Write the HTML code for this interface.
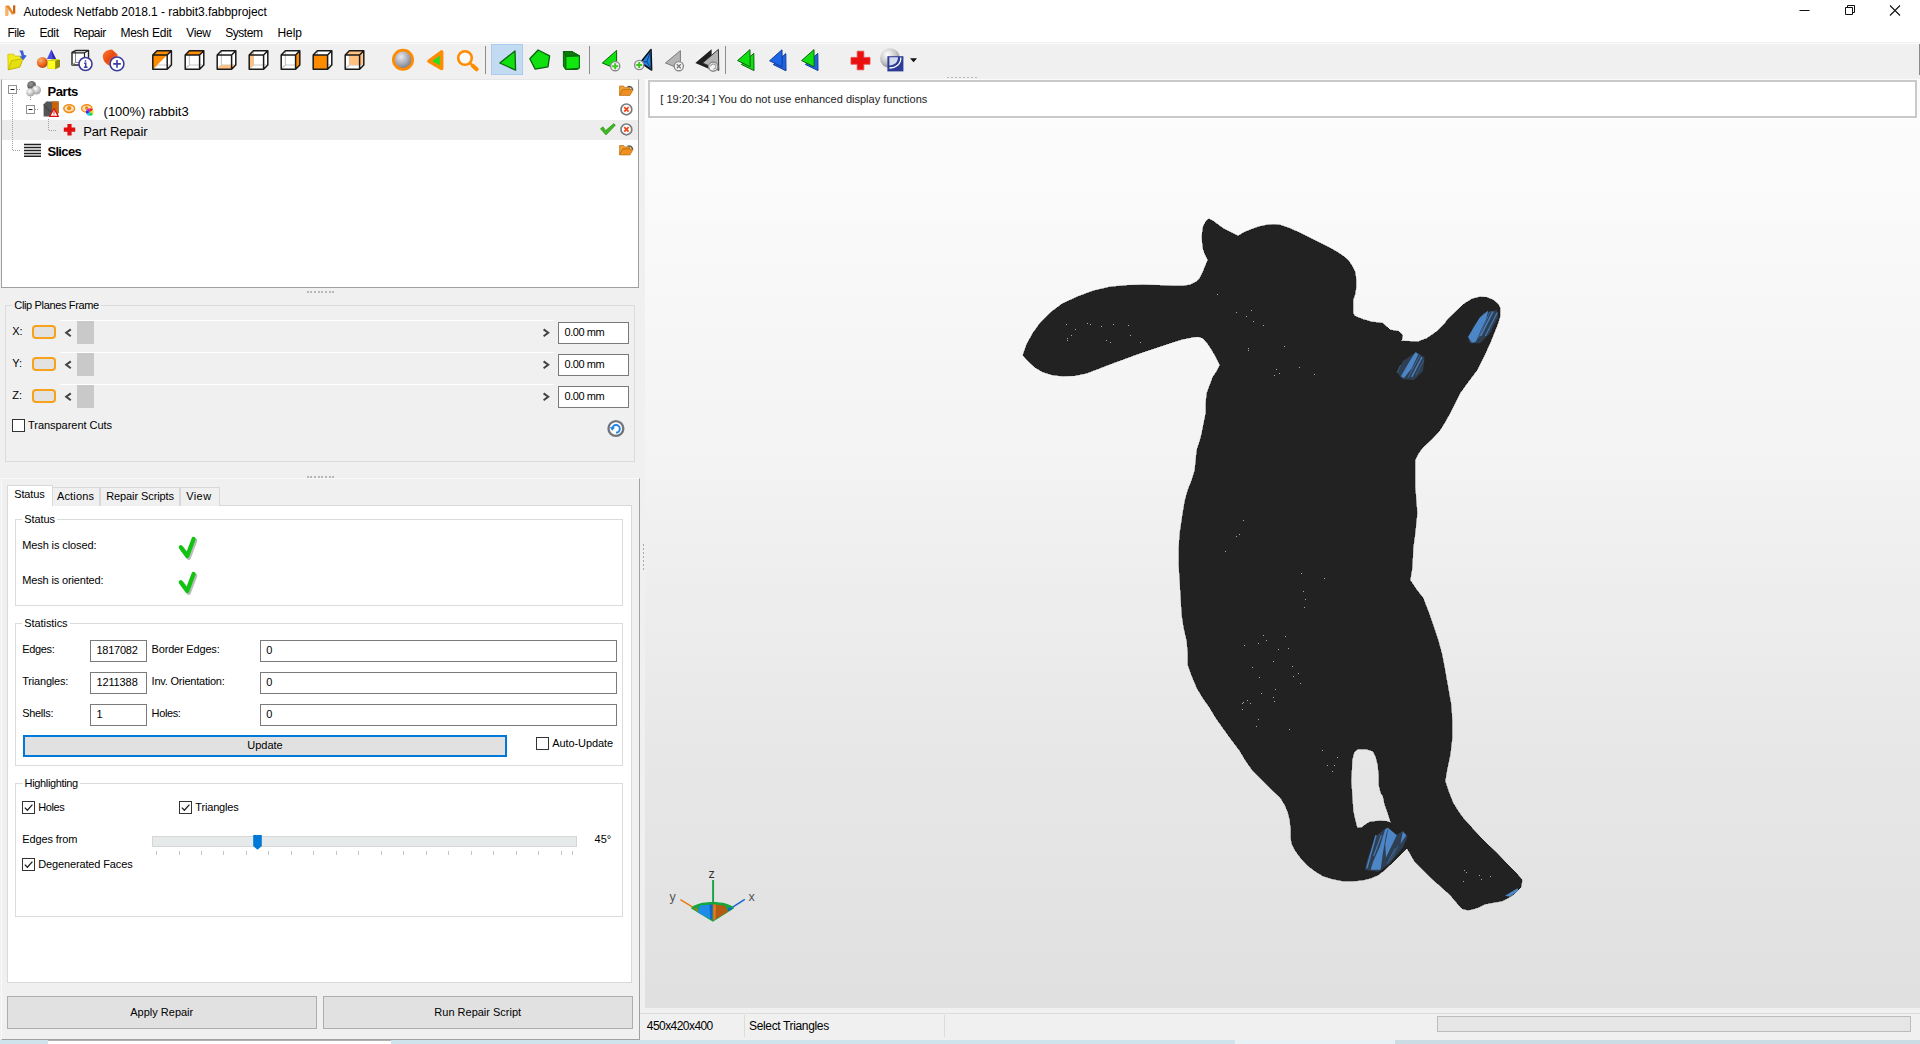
<!DOCTYPE html>
<html><head><meta charset="utf-8"><title>Autodesk Netfabb 2018.1 - rabbit3.fabbproject</title>
<style>

html,body{margin:0;padding:0;}
body{width:1920px;height:1044px;overflow:hidden;background:#f0f0f0;font-family:"Liberation Sans",sans-serif;color:#000;}
#app{position:relative;width:1920px;height:1044px;overflow:hidden;background:#f0f0f0;}
.abs{position:absolute;}
.t{position:absolute;white-space:nowrap;line-height:1;}
.ui{font-size:12px;}
.ar{font-size:11px;color:#000;}
svg{position:absolute;overflow:visible;}
#titlebar{left:0;top:0;width:1920px;height:23px;background:#fff;}
#menubar{left:0;top:23px;width:1920px;height:19px;background:#fff;}
#toolbar{left:0;top:42px;width:1920px;height:37px;background:#f0f0f0;}
.sep{position:absolute;top:46px;width:1px;height:28px;background:#8d8d8d;}
#tree{left:1px;top:79px;width:636px;height:207px;background:#fff;border:1px solid #a0a0a0;border-top-color:#e6e6e6;}
.gb{position:absolute;border:1px solid #dcdcdc;}
.gbl{position:absolute;white-space:nowrap;line-height:1;font-size:11px;padding:0 2px;}
.inp{position:absolute;background:#fff;border:1px solid #7a7a7a;box-sizing:border-box;font-size:11px;line-height:20px;white-space:nowrap;}
.cb{position:absolute;width:13px;height:13px;box-sizing:border-box;border:1px solid #333;background:#fff;}
.btn{position:absolute;box-sizing:border-box;background:#e1e1e1;border:1px solid #adadad;font-size:11px;text-align:center;white-space:nowrap;}
.tab{position:absolute;box-sizing:border-box;background:#f0f0f0;border:1px solid #d9d9d9;border-bottom:none;font-size:11px;white-space:nowrap;}

</style></head>
<body>
<div id="app">
<div id="titlebar" class="abs"></div><div id="menubar" class="abs"></div><div id="toolbar" class="abs"></div><div class="abs" style="left:0;top:43px;width:1920px;height:1px;background:#fbfbfb"></div><div class="abs" style="left:1918.5px;top:44px;width:1.5px;height:31px;background:#8a8a8a"></div><div class="t " style="left:23.40px;top:6.00px;font-size:12px;letter-spacing:-0.047px;">Autodesk Netfabb 2018.1 - rabbit3.fabbproject</div><div class="t " style="left:7.50px;top:27.00px;font-size:12px;letter-spacing:-0.524px;">File</div><div class="t " style="left:39.40px;top:27.00px;font-size:12px;letter-spacing:-0.365px;">Edit</div><div class="t " style="left:73.40px;top:27.00px;font-size:12px;letter-spacing:-0.518px;">Repair</div><div class="t " style="left:120.40px;top:27.00px;font-size:12px;letter-spacing:-0.230px;">Mesh Edit</div><div class="t " style="left:186.20px;top:27.00px;font-size:12px;letter-spacing:-0.341px;">View</div><div class="t " style="left:225.20px;top:27.00px;font-size:12px;letter-spacing:-0.456px;">System</div><div class="t " style="left:277.40px;top:27.00px;font-size:12px;letter-spacing:-0.051px;">Help</div><div class="sep" style="left:485px"></div><div class="sep" style="left:589px"></div><div class="sep" style="left:725px"></div><div class="abs" style="left:946.5px;top:76.5px;width:2px;height:1.6px;background:#b8b8b8"></div><div class="abs" style="left:950.5px;top:76.5px;width:2px;height:1.6px;background:#b8b8b8"></div><div class="abs" style="left:954.5px;top:76.5px;width:2px;height:1.6px;background:#b8b8b8"></div><div class="abs" style="left:958.5px;top:76.5px;width:2px;height:1.6px;background:#b8b8b8"></div><div class="abs" style="left:962.5px;top:76.5px;width:2px;height:1.6px;background:#b8b8b8"></div><div class="abs" style="left:966.5px;top:76.5px;width:2px;height:1.6px;background:#b8b8b8"></div><div class="abs" style="left:970.5px;top:76.5px;width:2px;height:1.6px;background:#b8b8b8"></div><div class="abs" style="left:974.5px;top:76.5px;width:2px;height:1.6px;background:#b8b8b8"></div><svg style="left:0;top:0" width="1920" height="80" viewBox="0 0 1920 80"><g transform="translate(0.2,0.6) scale(0.96,0.9)"><path d="M5.6,17.2 V5.6 L9.2,5.4 L13.4,12.6 V5.4 H15.6 V14.2 L12.4,15.6 L8.4,9.2 V16.4 Z" fill="#e8862a"/><path d="M13.4,12.6 V5.4 H15.6 V14.2 Z" fill="#c86414"/><path d="M5.6,17.2 V5.6 L8.4,9.2 V16.4 Z" fill="#f6b46a"/></g>
<path d="M1799.5,10.5 h10" stroke="#111" stroke-width="1" fill="none"/>
<path d="M1845.5,7.5 h7 v7 h-7 z M1847.5,7.5 v-2 h7 v7 h-2" stroke="#111" stroke-width="1" fill="none"/>
<path d="M1890,5.5 l10,10 M1900,5.5 l-10,10" stroke="#111" stroke-width="1.1" fill="none"/>

<g>
<path d="M7.8,54.4 L13.4,54 L15,56.2 L21.4,56 L22,60 L19.8,67 L8.2,69.8 Z" fill="#f2ea1a" stroke="#c4bc00" stroke-width="0.7" stroke-linejoin="round"/>
<path d="M8.2,69.8 L11.6,60.6 L23.4,58.6 L19.6,67.2 Z" fill="#e6de10" stroke="#b4ac00" stroke-width="0.7" stroke-linejoin="round"/>
<path d="M19.3,50.4 L23,50.4 L24,54.8 L26.7,55.8 L23.4,59.9 L19.3,56.5 L21.7,56.5 L21,53.5 Z" fill="#3b5be0"/>
</g>
<g>
<defs><radialGradient id="gsph" cx="0.35" cy="0.3" r="0.8"><stop offset="0" stop-color="#ffb070"/><stop offset="0.6" stop-color="#e8641a"/><stop offset="1" stop-color="#a84008"/></radialGradient></defs>
<polygon points="51.3,49.6 47,59 56,59" fill="#4a4ae8"/>
<polygon points="51.3,49.6 56,59 53,59.5" fill="#2c2ca0"/>
<circle cx="42.4" cy="62.4" r="5.5" fill="url(#gsph)"/>
<polygon points="47.6,60.4 56.5,59 60,60 60,67 55.2,69.2 47.6,68.6" fill="#8c8c14"/>
<polygon points="47.6,60.6 55.2,61 55.2,69.2 47.6,68.6" fill="#ffff20"/>
<polygon points="47.6,60.6 52.5,59 60,59.2 55.2,61" fill="#d8d820"/>
</g>
<g>
<path d="M72,52.5 L76,50.5 L88.5,50.5 L88.5,62 L84.5,65 L72,65 Z" fill="#fff" stroke="#222" stroke-width="1.4" stroke-linejoin="round"/>
<path d="M75.5,51.5 V62.5 L72,65 M75.5,62.5 H88" fill="none" stroke="#888" stroke-width="1"/>
<path d="M72,52.8 H84.5 V65 M84.5,52.8 L88.5,50.5" fill="none" stroke="#222" stroke-width="1.2"/>
<circle cx="85.5" cy="64" r="6.5" fill="#fff" stroke="#3c3c9c" stroke-width="1.6"/>
<path d="M85.5,60.2 v1.6 M84.1,63.2 H85.7 V67 M83.9,67.2 H87.5" stroke="#3c3c9c" stroke-width="1.5" fill="none"/>
</g>
<g>
<defs><linearGradient id="gcyl" x1="0" y1="0" x2="1" y2="1"><stop offset="0" stop-color="#ff7a30"/><stop offset="0.5" stop-color="#e84a10"/><stop offset="1" stop-color="#ff9a60"/></linearGradient></defs>
<path d="M103,58 C102,53 106,50 112,49.6 L118,55 L110,66 C106,64 103.5,61.5 103,58 Z" fill="url(#gcyl)"/>
<circle cx="117" cy="63.9" r="6.9" fill="#fff" stroke="#3c3c9c" stroke-width="1.6"/>
<path d="M113.2,63.9 h7.6 M117,60.1 v7.6" stroke="#3c3c9c" stroke-width="1.6" fill="none"/>
</g><g><polygon points="152.8,55 157,50.8 171.4,50.8 171.4,65 167.2,69.2 152.8,69.2" fill="#fff"/><path d="M157,50.8 V65 H171.4 M157,65 L152.8,69.2" stroke="#c8c8c8" stroke-width="1.2" fill="none"/><polygon points="152.8,55 157,50.8 171.4,50.8 167.2,55" fill="#ff8c00"/><polygon points="152.8,55 167.2,55 152.8,69.2" fill="#ff8c00"/><path d="M152.8,55 H167.2 V69.2 H152.8 Z M152.8,55 L157,50.8 H171.4 L167.2,55 M171.4,50.8 V65 L167.2,69.2" stroke="#1a1a1a" stroke-width="1.5" fill="none" stroke-linejoin="round"/></g><g><polygon points="185.2,55 189.4,50.8 203.8,50.8 203.8,65 199.6,69.2 185.2,69.2" fill="#fff"/><path d="M189.4,50.8 V65 H203.8 M189.4,65 L185.2,69.2" stroke="#c8c8c8" stroke-width="1.2" fill="none"/><polygon points="185.2,55 189.4,50.8 203.8,50.8 199.6,55" fill="#ff8c00"/><path d="M185.2,55 H199.6 V69.2 H185.2 Z M185.2,55 L189.4,50.8 H203.8 L199.6,55 M203.8,50.8 V65 L199.6,69.2" stroke="#1a1a1a" stroke-width="1.5" fill="none" stroke-linejoin="round"/></g><g><polygon points="217.2,55 221.4,50.8 235.8,50.8 235.8,65 231.6,69.2 217.2,69.2" fill="#fff"/><path d="M221.4,50.8 V65 H235.8 M221.4,65 L217.2,69.2" stroke="#c8c8c8" stroke-width="1.2" fill="none"/><polygon points="217.2,69.2 221.4,65 235.8,65 231.6,69.2" fill="#ffc080"/><path d="M217.2,55 H231.6 V69.2 H217.2 Z M217.2,55 L221.4,50.8 H235.8 L231.6,55 M235.8,50.8 V65 L231.6,69.2" stroke="#1a1a1a" stroke-width="1.5" fill="none" stroke-linejoin="round"/></g><g><polygon points="249.2,55 253.4,50.8 267.8,50.8 267.8,65 263.6,69.2 249.2,69.2" fill="#fff"/><path d="M253.4,50.8 V65 H267.8 M253.4,65 L249.2,69.2" stroke="#c8c8c8" stroke-width="1.2" fill="none"/><polygon points="249.2,55 253.4,50.8 253.4,65 249.2,69.2" fill="#ffc080"/><path d="M249.2,55 H263.6 V69.2 H249.2 Z M249.2,55 L253.4,50.8 H267.8 L263.6,55 M267.8,50.8 V65 L263.6,69.2" stroke="#1a1a1a" stroke-width="1.5" fill="none" stroke-linejoin="round"/></g><g><polygon points="281.2,55 285.4,50.8 299.8,50.8 299.8,65 295.6,69.2 281.2,69.2" fill="#fff"/><path d="M285.4,50.8 V65 H299.8 M285.4,65 L281.2,69.2" stroke="#c8c8c8" stroke-width="1.2" fill="none"/><polygon points="295.6,55 299.8,50.8 299.8,65 295.6,69.2" fill="#ff8c00"/><path d="M281.2,55 H295.6 V69.2 H281.2 Z M281.2,55 L285.4,50.8 H299.8 L295.6,55 M299.8,50.8 V65 L295.6,69.2" stroke="#1a1a1a" stroke-width="1.5" fill="none" stroke-linejoin="round"/></g><g><polygon points="313.2,55 317.4,50.8 331.8,50.8 331.8,65 327.6,69.2 313.2,69.2" fill="#fff"/><path d="M317.4,50.8 V65 H331.8 M317.4,65 L313.2,69.2" stroke="#c8c8c8" stroke-width="1.2" fill="none"/><rect x="313.2" y="55" width="14.4" height="14.2" fill="#ff8c00"/><path d="M313.2,55 H327.6 V69.2 H313.2 Z M313.2,55 L317.4,50.8 H331.8 L327.6,55 M331.8,50.8 V65 L327.6,69.2" stroke="#1a1a1a" stroke-width="1.5" fill="none" stroke-linejoin="round"/></g><g><polygon points="345.2,55 349.4,50.8 363.8,50.8 363.8,65 359.6,69.2 345.2,69.2" fill="#fff"/><path d="M349.4,50.8 V65 H363.8 M349.4,65 L345.2,69.2" stroke="#c8c8c8" stroke-width="1.2" fill="none"/><rect x="349.4" y="50.8" width="13.4" height="14.2" fill="#ffc080"/><polygon points="345.2,55 349.4,50.8 363.8,50.8 359.6,55" fill="#ffc080"/><path d="M345.2,55 H359.6 V69.2 H345.2 Z M345.2,55 L349.4,50.8 H363.8 L359.6,55 M363.8,50.8 V65 L359.6,69.2" stroke="#1a1a1a" stroke-width="1.5" fill="none" stroke-linejoin="round"/></g>
<g>
<defs><radialGradient id="gsp2" cx="0.4" cy="0.35" r="0.75"><stop offset="0" stop-color="#e8e8f0"/><stop offset="0.55" stop-color="#a0a4b0"/><stop offset="1" stop-color="#5a6480"/></radialGradient></defs>
<circle cx="403" cy="59.7" r="9.6" fill="url(#gsp2)" stroke="#ff8c00" stroke-width="2.8"/>
</g><polygon points="429,61.2 441.6,52 441.6,68.4" fill="#20e020" stroke="#ff8c00" stroke-width="3.6" stroke-linejoin="round"/><g><circle cx="465" cy="58" r="6.8" fill="#fcfcfc" stroke="#ff8c00" stroke-width="2.6"/><path d="M470.2,63.2 L472.5,65.4" stroke="#ff8c00" stroke-width="2.6"/><path d="M473,66 L476.6,69.2" stroke="#ff8c00" stroke-width="4.2" stroke-linecap="round"/></g><rect x="491.5" y="44.5" width="31" height="30" fill="#c2dbf3" stroke="#a8cbee" stroke-width="1"/><polygon points="499.8,63 515,51 515.6,70.2" fill="#10e010" stroke="#0a640a" stroke-width="1.3" stroke-linejoin="round"/><polygon points="538.1,50 549.6,55.8 548,66.8 535.2,69.2 529.8,58.8" fill="#10e010" stroke="#0a640a" stroke-width="1.3" stroke-linejoin="round"/><g stroke="#0a640a" stroke-width="1" stroke-linejoin="round">
<polygon points="563.4,51.5 572,51.5 579.5,55.8 579.5,68 577.5,69.5 565.5,69.5 563.4,66" fill="#0a8c0a"/>
<polygon points="565.8,56.2 579.3,55.8 579.3,68.2 566,69.3" fill="#10e810"/>
<polygon points="563.4,51.6 572,51.6 579.3,55.8 565.8,56.2" fill="#0c7a0c"/>
</g><polygon points="602.3,63 616.6,50.4 616.6,69" fill="#10e010" stroke="#0a640a" stroke-width="1" stroke-linejoin="round"/><circle cx="615.2" cy="66.2" r="4.6" fill="#f4f4f4" stroke="#8a8a8a" stroke-width="1.4"/><path d="M612.2,66.2 h6 M615.2,63.2 v6" stroke="#3cc81e" stroke-width="2" fill="none"/><polygon points="640.5,62.5 651,49.5 651.6,70" fill="#1e82e6" stroke="#111" stroke-width="1.6" stroke-linejoin="round"/><path d="M651.3,50 L646.8,61.5 L651.3,69.6 M646.8,61.5 L641,62.6" stroke="#123c78" stroke-width="1" fill="none"/><circle cx="639.2" cy="65" r="4.6" fill="#f4f4f4" stroke="#8a8a8a" stroke-width="1.4"/><path d="M636.2,65 h6 M639.2,62 v6" stroke="#3cc81e" stroke-width="2" fill="none"/><polygon points="665.5,63 680.4,50.6 680.4,69" fill="#b4b4b4" stroke="#7a7a7a" stroke-width="1" stroke-linejoin="round"/><circle cx="678.8" cy="66.2" r="4.6" fill="#f4f4f4" stroke="#8a8a8a" stroke-width="1.4"/><path d="M676.8,64.2 l4,4 M680.8,64.2 l-4,4" stroke="#777" stroke-width="1.3" fill="none"/><polygon points="695.3,63 711.6,49.2 711.6,70" fill="#1e1e1e"/><polygon points="702.6,63 718.4,49.4 718.8,70.4" fill="#b4b4b4" stroke="#333" stroke-width="1" stroke-linejoin="round"/><circle cx="713.2" cy="66.6" r="4.6" fill="#f4f4f4" stroke="#8a8a8a" stroke-width="1.4"/><path d="M710.6,66.6 a2.6,2.6 0 1 1 2.6,2.6" stroke="#aaa" stroke-width="1.3" fill="none"/><polygon points="741.4,64.4 753.8,53.4 754,70.6" fill="#10e010" stroke="#0a640a" stroke-width="1" stroke-linejoin="round"/><polygon points="737.6,60.6 750,49.6 750.2,66.8" fill="#10e010" stroke="#0a640a" stroke-width="1" stroke-linejoin="round"/><polygon points="773.4,64.6 785.8,53.6 786,70.8" fill="#1e64e6" stroke="#123c96" stroke-width="1" stroke-linejoin="round"/><polygon points="769.6,60.8 782,49.8 782.2,67" fill="#1e64e6" stroke="#123c96" stroke-width="1" stroke-linejoin="round"/><polygon points="805.4,64.4 817.8,53.4 818,70.6" fill="#1e64e6" stroke="#123c96" stroke-width="1" stroke-linejoin="round"/><polygon points="801.6,60.6 814,49.6 814.2,66.8" fill="#10e010" stroke="#0a640a" stroke-width="1" stroke-linejoin="round"/><path d="M857.2,51.2 h6.6 v6.2 h6.2 v6.8 h-6.2 v5.6 h-6.6 v-5.6 h-6.2 v-6.8 h6.2 Z" fill="#e81010" stroke="#f04040" stroke-width="0.8" stroke-linejoin="round"/>
<g>
<defs><radialGradient id="gsp3" cx="0.38" cy="0.32" r="0.8"><stop offset="0" stop-color="#ffffff"/><stop offset="0.5" stop-color="#c8c8c8"/><stop offset="1" stop-color="#7a7a7a"/></radialGradient></defs>
<circle cx="890" cy="58.2" r="10" fill="url(#gsp3)"/>
<rect x="887.4" y="56.2" width="16" height="15.2" fill="#2c3c96"/>
<path d="M900.8,57.6 C901,64 896,68.2 889.4,68" fill="none" stroke="#fff" stroke-width="1.3"/>
<path d="M898,57.2 C898,62 894.5,65.4 889.4,65.4 L889.4,57.2 Z" fill="#e8ecf8" opacity="0.9"/>
</g><polygon points="910,58.2 917,58.2 913.5,62.2" fill="#111"/></svg>
<div id="tree" class="abs"></div>
<div class="abs" style="left:2px;top:120px;width:636px;height:20px;background:#ededed"></div>
<svg style="left:0;top:79px" width="640" height="210" viewBox="0 79 640 210"><g stroke="#a0a0a0" stroke-width="1" stroke-dasharray="1,1" fill="none"><path d="M12.5,95 V150.5 H21 M17,89.5 H21 M30.5,95 V100 M35,109.5 H39 M48.5,119 V130.5 H56"/></g><g stroke="#919191" fill="#fff"><rect x="8.5" y="85.500" width="8" height="8"/><rect x="26.5" y="105.5" width="8" height="8"/></g><path d="M10.5,89.5 h4 M28.5,109.5 h4" stroke="#222" stroke-width="1"/><defs><radialGradient id="gp1" cx="0.4" cy="0.35" r="0.7"><stop offset="0" stop-color="#999"/><stop offset="1" stop-color="#444"/></radialGradient><radialGradient id="gp2" cx="0.4" cy="0.35" r="0.7"><stop offset="0" stop-color="#fff"/><stop offset="1" stop-color="#9a9a9a"/></radialGradient></defs><circle cx="31.6" cy="85.4" r="4.4" fill="url(#gp1)"/><circle cx="36.4" cy="90" r="4.6" fill="url(#gp2)"/><circle cx="30.4" cy="92.4" r="4.2" fill="url(#gp2)"/><polygon points="43.6,105 47,101.4 58.6,101.4 58.6,113 55,116.6 43.6,116.6" fill="#555"/><polygon points="52,101.4 58.6,101.4 58.6,113 55,116.6 52,116.6" fill="#c8640a"/><path d="M43.6,105 L52,113 M47,101.4 L43.6,105" stroke="#333" stroke-width="0.8"/><polygon points="54,108.6 58.4,116.4 49.6,116.4" fill="#fff" stroke="#e01010" stroke-width="1.2" stroke-linejoin="round"/><path d="M54,111.2 v2.6 M54,114.6 v0.9" stroke="#e01010" stroke-width="1"/><ellipse cx="69.2" cy="108.6" rx="5.4" ry="3.8" fill="#fde2b8" stroke="#f08c14" stroke-width="1.5"/><circle cx="69.2" cy="108.2" r="2.1" fill="#f08c14"/><ellipse cx="86.8" cy="108.4" rx="5.2" ry="3.6" fill="#fde2b8" stroke="#f08c14" stroke-width="1.4"/><circle cx="86.6" cy="108" r="1.8" fill="#f08c14"/><g transform="translate(89.8,112)"><path d="M0,0 L0,-3.8 A3.8,3.8 0 0 1 3.3,-1.9 Z" fill="#e82020"/><path d="M0,0 L3.3,-1.9 A3.8,3.8 0 0 1 3.3,1.9 Z" fill="#e8e020"/><path d="M0,0 L3.3,1.9 A3.8,3.8 0 0 1 0,3.8 Z" fill="#20d040"/><path d="M0,0 L0,3.8 A3.8,3.8 0 0 1 -3.3,1.9 Z" fill="#20c8e8"/><path d="M0,0 L-3.3,1.9 A3.8,3.8 0 0 1 -3.3,-1.9 Z" fill="#2030e0"/><path d="M0,0 L-3.3,-1.9 A3.8,3.8 0 0 1 0,-3.8 Z" fill="#c020d0"/></g><path d="M67.4,124 h4.2 v3.6 h3.6 v4.2 h-3.6 v3.6 h-4.2 v-3.6 h-3.6 v-4.2 h3.6 Z" fill="#e01010"/><path d="M24,144.5 h17 M24,147.5 h17 M24,150.5 h17 M24,153.500 h17 M24,156.2 h17" stroke="#222" stroke-width="1.6"/><g id="fold1"><path d="M619.6,86 h4 l1,1.4 h5.4 v2 h-7 l-3.400,5.800 Z" fill="#f0a030" stroke="#b86a10" stroke-width="0.7"/><path d="M619.6,95.4 L622.600,89.600 H633.200 L630,95.4 Z" fill="#f09020" stroke="#b86a10" stroke-width="0.7"/><path d="M627.5,86.800 a3.4,3.400 0 0 1 5,3" fill="none" stroke="#555" stroke-width="1.4"/></g><use href="#fold1" y="59.5"/><g id="cls1"><circle cx="626.400" cy="109.400" r="5.400" fill="#fff" stroke="#7c7c7c" stroke-width="1.7"/><path d="M624.200,107.200 l4.400,4.400 M628.600,107.200 l-4.400,4.400" stroke="#f04818" stroke-width="1.800"/></g><use href="#cls1" y="20"/><path d="M600.400,128.800 L603,126.800 L605.600,130.600 L613.800,123.600 L615.400,125.200 L606,135 Z" fill="#3cb820" stroke="#2a8a14" stroke-width="0.6"/></svg>
<div class="t " style="left:47.60px;top:85.00px;font-size:13px;letter-spacing:-0.449px;font-weight:bold;">Parts</div>
<div class="t " style="left:103.60px;top:105.00px;font-size:13px;letter-spacing:-0.019px;">(100%) rabbit3</div>
<div class="t " style="left:83.20px;top:125.00px;font-size:13px;letter-spacing:-0.147px;">Part Repair</div>
<div class="t " style="left:47.40px;top:145.00px;font-size:13px;letter-spacing:-0.651px;font-weight:bold;">Slices</div>
<div class="abs" style="left:306.5px;top:291px;width:2px;height:1.6px;background:#b8b8b8"></div><div class="abs" style="left:310.2px;top:291px;width:2px;height:1.6px;background:#b8b8b8"></div><div class="abs" style="left:313.9px;top:291px;width:2px;height:1.6px;background:#b8b8b8"></div><div class="abs" style="left:317.6px;top:291px;width:2px;height:1.6px;background:#b8b8b8"></div><div class="abs" style="left:321.3px;top:291px;width:2px;height:1.6px;background:#b8b8b8"></div><div class="abs" style="left:325px;top:291px;width:2px;height:1.6px;background:#b8b8b8"></div><div class="abs" style="left:328.7px;top:291px;width:2px;height:1.6px;background:#b8b8b8"></div><div class="abs" style="left:332.4px;top:291px;width:2px;height:1.6px;background:#b8b8b8"></div>
<div class="abs" style="left:306.5px;top:476px;width:2px;height:1.6px;background:#b8b8b8"></div><div class="abs" style="left:310.2px;top:476px;width:2px;height:1.6px;background:#b8b8b8"></div><div class="abs" style="left:313.9px;top:476px;width:2px;height:1.6px;background:#b8b8b8"></div><div class="abs" style="left:317.6px;top:476px;width:2px;height:1.6px;background:#b8b8b8"></div><div class="abs" style="left:321.3px;top:476px;width:2px;height:1.6px;background:#b8b8b8"></div><div class="abs" style="left:325px;top:476px;width:2px;height:1.6px;background:#b8b8b8"></div><div class="abs" style="left:328.7px;top:476px;width:2px;height:1.6px;background:#b8b8b8"></div><div class="abs" style="left:332.4px;top:476px;width:2px;height:1.6px;background:#b8b8b8"></div>
<div class="gb" style="left:5px;top:305px;width:630px;height:157px;box-sizing:border-box"></div>
<div class="abs" style="left:12.3px;top:304px;width:88.7px;height:3px;background:#f0f0f0"></div><div class="t " style="left:14.30px;top:300.00px;font-size:11px;letter-spacing:-0.350px;">Clip Planes Frame</div>
<div class="t " style="left:12.20px;top:326.00px;font-size:11px;">X:</div>
<div class="abs" style="left:32px;top:325px;width:24px;height:14px;box-sizing:border-box;border:2px solid #f6a21a;border-radius:4px;background:#e2e2e2"></div>
<div class="abs" style="left:60px;top:320px;width:494px;height:1px;background:#fff"></div>
<div class="abs" style="left:77px;top:321px;width:17px;height:23px;background:#c9c9c9"></div>
<svg style="left:0;top:320.5px" width="640" height="24" viewBox="0 0 640 24"><path d="M70.800,8.400 L66.200,11.800 L70.800,15.200" stroke="#444" stroke-width="2" fill="none"/><path d="M543.600,8.400 L548.200,11.800 L543.600,15.200" stroke="#444" stroke-width="2" fill="none"/></svg>
<div class="inp" style="left:558px;top:322px;width:71px;height:22px;"></div>
<div class="t " style="left:564.60px;top:327.00px;font-size:11px;letter-spacing:-0.460px;">0.00 mm</div>
<div class="t " style="left:12.20px;top:358.00px;font-size:11px;">Y:</div>
<div class="abs" style="left:32px;top:357px;width:24px;height:14px;box-sizing:border-box;border:2px solid #f6a21a;border-radius:4px;background:#e2e2e2"></div>
<div class="abs" style="left:60px;top:352px;width:494px;height:1px;background:#fff"></div>
<div class="abs" style="left:77px;top:353px;width:17px;height:23px;background:#c9c9c9"></div>
<svg style="left:0;top:352.5px" width="640" height="24" viewBox="0 0 640 24"><path d="M70.800,8.400 L66.200,11.800 L70.800,15.200" stroke="#444" stroke-width="2" fill="none"/><path d="M543.600,8.400 L548.200,11.800 L543.600,15.200" stroke="#444" stroke-width="2" fill="none"/></svg>
<div class="inp" style="left:558px;top:354px;width:71px;height:22px;"></div>
<div class="t " style="left:564.60px;top:359.00px;font-size:11px;letter-spacing:-0.460px;">0.00 mm</div>
<div class="t " style="left:12.20px;top:390.00px;font-size:11px;">Z:</div>
<div class="abs" style="left:32px;top:389px;width:24px;height:14px;box-sizing:border-box;border:2px solid #f6a21a;border-radius:4px;background:#e2e2e2"></div>
<div class="abs" style="left:60px;top:384px;width:494px;height:1px;background:#fff"></div>
<div class="abs" style="left:77px;top:385px;width:17px;height:23px;background:#c9c9c9"></div>
<svg style="left:0;top:384.5px" width="640" height="24" viewBox="0 0 640 24"><path d="M70.800,8.400 L66.200,11.800 L70.800,15.200" stroke="#444" stroke-width="2" fill="none"/><path d="M543.600,8.400 L548.200,11.800 L543.600,15.200" stroke="#444" stroke-width="2" fill="none"/></svg>
<div class="inp" style="left:558px;top:386px;width:71px;height:22px;"></div>
<div class="t " style="left:564.60px;top:391.00px;font-size:11px;letter-spacing:-0.460px;">0.00 mm</div>
<div class="cb" style="left:12px;top:419px;width:13px;height:13px;"></div>
<div class="t " style="left:28.00px;top:420.00px;font-size:11px;letter-spacing:-0.037px;">Transparent Cuts</div>
<svg style="left:600px;top:415px" width="32" height="28" viewBox="600 415 32 28"><circle cx="615.900" cy="428.500" r="7.400" fill="#fdfdfd" stroke="#72767c" stroke-width="2.400"/><path d="M612.200,428.800 a3.800,3.800 0 1 1 3.800,3.800" fill="none" stroke="#1e82e6" stroke-width="1.900"/><path d="M609.800,427 l2.400,3.800 l2.800,-3.400 z" fill="#1e82e6"/></svg>
<div class="abs" style="left:1px;top:478px;width:639px;height:562px;border-left:1px solid #fafafa;border-top:1px solid #fafafa;border-right:1px solid #a0a0a0;border-bottom:1px solid #a0a0a0;box-sizing:border-box"></div>
<div class="abs" style="left:6.5px;top:505px;width:625px;height:477.5px;background:#fff;border:1px solid #d9d9d9;box-sizing:border-box"></div>
<div class="tab" style="left:52px;top:487px;width:47.5px;height:18.5px;"></div>
<div class="t " style="left:57.00px;top:491.00px;font-size:11px;letter-spacing:0.143px;">Actions</div>
<div class="tab" style="left:99.5px;top:487px;width:80px;height:18.5px;"></div>
<div class="t " style="left:106.20px;top:491.00px;font-size:11px;letter-spacing:-0.094px;">Repair Scripts</div>
<div class="tab" style="left:179.5px;top:487px;width:40.5px;height:18.5px;"></div>
<div class="t " style="left:186.20px;top:491.00px;font-size:11px;letter-spacing:0.416px;">View</div>
<div class="abs" style="left:6.5px;top:485px;width:46px;height:21px;background:#fff;border:1px solid #d9d9d9;border-bottom:none;box-sizing:border-box"></div>
<div class="t " style="left:14.30px;top:489.00px;font-size:11px;letter-spacing:-0.161px;">Status</div>
<div class="gb" style="left:15px;top:519px;width:608px;height:87px;box-sizing:border-box"></div><div class="abs" style="left:22.2px;top:518px;width:34.9px;height:3px;background:#fff"></div><div class="t " style="left:24.20px;top:514.00px;font-size:11px;letter-spacing:-0.052px;">Status</div>
<div class="t " style="left:22.20px;top:540.00px;font-size:11px;letter-spacing:-0.104px;">Mesh is closed:</div>
<div class="t " style="left:22.20px;top:575.00px;font-size:11px;letter-spacing:-0.149px;">Mesh is oriented:</div>
<svg style="left:176.5px;top:535px" width="26" height="28" viewBox="0 0 26 28"><path d="M3.800,12.200 L10.200,21 L16.600,4" fill="none" stroke="#555" stroke-opacity="0.4" stroke-width="4.4" stroke-linecap="round" stroke-linejoin="round" transform="translate(1.500,1.600)"/><path d="M3.800,12.200 L10.200,21 L16.600,4" fill="none" stroke="#12c412" stroke-width="4.200" stroke-linecap="round" stroke-linejoin="round"/></svg>
<svg style="left:176.5px;top:570px" width="26" height="28" viewBox="0 0 26 28"><path d="M3.800,12.200 L10.200,21 L16.600,4" fill="none" stroke="#555" stroke-opacity="0.4" stroke-width="4.4" stroke-linecap="round" stroke-linejoin="round" transform="translate(1.500,1.600)"/><path d="M3.800,12.200 L10.200,21 L16.600,4" fill="none" stroke="#12c412" stroke-width="4.200" stroke-linecap="round" stroke-linejoin="round"/></svg>
<div class="gb" style="left:15px;top:623px;width:608px;height:143px;box-sizing:border-box"></div><div class="abs" style="left:22.2px;top:622px;width:47.4px;height:3px;background:#fff"></div><div class="t " style="left:24.20px;top:618.00px;font-size:11px;letter-spacing:-0.064px;">Statistics</div>
<div class="t " style="left:22.20px;top:644.00px;font-size:11px;letter-spacing:-0.335px;">Edges:</div>
<div class="inp" style="left:90px;top:640px;width:57px;height:22px;"></div>
<div class="t " style="left:96.40px;top:645.00px;font-size:11px;letter-spacing:-0.234px;">1817082</div>
<div class="t " style="left:151.60px;top:644.00px;font-size:11px;letter-spacing:-0.185px;">Border Edges:</div>
<div class="inp" style="left:260px;top:640px;width:357px;height:22px;"></div>
<div class="t " style="left:266.20px;top:645.00px;font-size:11px;">0</div>
<div class="t " style="left:22.20px;top:676.00px;font-size:11px;letter-spacing:-0.188px;">Triangles:</div>
<div class="inp" style="left:90px;top:672px;width:57px;height:22px;"></div>
<div class="t " style="left:96.40px;top:677.00px;font-size:11px;letter-spacing:-0.108px;">1211388</div>
<div class="t " style="left:151.60px;top:676.00px;font-size:11px;letter-spacing:-0.226px;">Inv. Orientation:</div>
<div class="inp" style="left:260px;top:672px;width:357px;height:22px;"></div>
<div class="t " style="left:266.20px;top:677.00px;font-size:11px;">0</div>
<div class="t " style="left:22.20px;top:708.00px;font-size:11px;letter-spacing:-0.295px;">Shells:</div>
<div class="inp" style="left:90px;top:704px;width:57px;height:22px;"></div>
<div class="t " style="left:96.40px;top:709.00px;font-size:11px;">1</div>
<div class="t " style="left:151.60px;top:708.00px;font-size:11px;letter-spacing:-0.378px;">Holes:</div>
<div class="inp" style="left:260px;top:704px;width:357px;height:22px;"></div>
<div class="t " style="left:266.20px;top:709.00px;font-size:11px;">0</div>
<div class="btn" style="left:23px;top:734.5px;width:484px;height:22px;border:2px solid #0078d7;line-height:17px;">Update</div>
<div class="cb" style="left:536px;top:737px;width:13px;height:13px;"></div>
<div class="t " style="left:552.20px;top:738.00px;font-size:11px;letter-spacing:-0.091px;">Auto-Update</div>
<div class="gb" style="left:15px;top:783px;width:608px;height:134px;box-sizing:border-box"></div><div class="abs" style="left:22.6px;top:782px;width:57.4px;height:3px;background:#fff"></div><div class="t " style="left:24.60px;top:778.00px;font-size:11px;letter-spacing:-0.355px;">Highlighting</div>
<div class="cb" style="left:22px;top:801px;width:13px;height:13px;"><svg style="left:0;top:0" width="11" height="11" viewBox="0 0 11 11"><path d="M1.800,5.600 L4.400,8.200 L9.400,2.600" fill="none" stroke="#222" stroke-width="1.300"/></svg></div>
<div class="t " style="left:38.20px;top:802.00px;font-size:11px;letter-spacing:-0.383px;">Holes</div>
<div class="cb" style="left:179px;top:801px;width:13px;height:13px;"><svg style="left:0;top:0" width="11" height="11" viewBox="0 0 11 11"><path d="M1.800,5.600 L4.400,8.200 L9.400,2.600" fill="none" stroke="#222" stroke-width="1.300"/></svg></div>
<div class="t " style="left:195.30px;top:802.00px;font-size:11px;letter-spacing:-0.168px;">Triangles</div>
<div class="t " style="left:22.20px;top:834.00px;font-size:11px;letter-spacing:-0.120px;">Edges from</div>
<div class="abs" style="left:152px;top:835.5px;width:425px;height:11px;box-sizing:border-box;background:#e7eaea;border:1px solid #d6d6d6"></div>
<svg style="left:250px;top:833px" width="16" height="20" viewBox="250 833 16 20"><path d="M253.200,835 H261.800 V846 L257.500,849.800 L253.200,846 Z" fill="#0078d7"/></svg>
<div class="abs" style="left:156.0px;top:851px;width:1px;height:4px;background:#c4c4c4"></div><div class="abs" style="left:178.5px;top:851px;width:1px;height:4px;background:#c4c4c4"></div><div class="abs" style="left:200.9px;top:851px;width:1px;height:4px;background:#c4c4c4"></div><div class="abs" style="left:223.4px;top:851px;width:1px;height:4px;background:#c4c4c4"></div><div class="abs" style="left:245.9px;top:851px;width:1px;height:4px;background:#c4c4c4"></div><div class="abs" style="left:268.4px;top:851px;width:1px;height:4px;background:#c4c4c4"></div><div class="abs" style="left:290.8px;top:851px;width:1px;height:4px;background:#c4c4c4"></div><div class="abs" style="left:313.3px;top:851px;width:1px;height:4px;background:#c4c4c4"></div><div class="abs" style="left:335.8px;top:851px;width:1px;height:4px;background:#c4c4c4"></div><div class="abs" style="left:358.2px;top:851px;width:1px;height:4px;background:#c4c4c4"></div><div class="abs" style="left:380.7px;top:851px;width:1px;height:4px;background:#c4c4c4"></div><div class="abs" style="left:403.2px;top:851px;width:1px;height:4px;background:#c4c4c4"></div><div class="abs" style="left:425.6px;top:851px;width:1px;height:4px;background:#c4c4c4"></div><div class="abs" style="left:448.1px;top:851px;width:1px;height:4px;background:#c4c4c4"></div><div class="abs" style="left:470.6px;top:851px;width:1px;height:4px;background:#c4c4c4"></div><div class="abs" style="left:493.0px;top:851px;width:1px;height:4px;background:#c4c4c4"></div><div class="abs" style="left:515.5px;top:851px;width:1px;height:4px;background:#c4c4c4"></div><div class="abs" style="left:538.0px;top:851px;width:1px;height:4px;background:#c4c4c4"></div><div class="abs" style="left:560.5px;top:851px;width:1px;height:4px;background:#c4c4c4"></div><div class="abs" style="left:572px;top:851px;width:1px;height:4px;background:#c4c4c4"></div>
<div class="t " style="left:594.60px;top:834.00px;font-size:11px;">45&deg;</div>
<div class="cb" style="left:22px;top:858px;width:13px;height:13px;"><svg style="left:0;top:0" width="11" height="11" viewBox="0 0 11 11"><path d="M1.800,5.600 L4.400,8.200 L9.400,2.600" fill="none" stroke="#222" stroke-width="1.300"/></svg></div>
<div class="t " style="left:38.20px;top:859.00px;font-size:11px;letter-spacing:-0.134px;">Degenerated Faces</div>
<div class="btn" style="left:7px;top:995.5px;width:309.5px;height:33px;line-height:31px;">Apply Repair</div>
<div class="btn" style="left:323px;top:995.5px;width:309.5px;height:33px;line-height:31px;">Run Repair Script</div>
<div class="abs" style="left:645px;top:79px;width:1275px;height:40px;background:#fbfbfb"></div>
<div class="abs" style="left:648px;top:80px;width:1269px;height:38px;background:#fff;border:2px solid #c9c9c9;box-sizing:border-box"></div>
<div class="t " style="left:660.30px;top:94.00px;font-size:11px;letter-spacing:0.007px;color:#222">[ 19:20:34 ] You do not use enhanced display functions</div>
<div class="abs" style="left:645px;top:118px;width:1275px;height:890px;background:linear-gradient(to bottom,#fcfcfc 0%,#f4f4f4 35%,#e6e6e6 75%,#e0e0e0 100%)"></div>
<div class="abs" style="left:642.5px;top:544px;width:1.5px;height:1.5px;background:#a8a8a8"></div><div class="abs" style="left:643.5px;top:545.5px;width:1.5px;height:1.5px;background:#fafafa"></div><div class="abs" style="left:642.5px;top:548px;width:1.5px;height:1.5px;background:#a8a8a8"></div><div class="abs" style="left:643.5px;top:549.5px;width:1.5px;height:1.5px;background:#fafafa"></div><div class="abs" style="left:642.5px;top:552px;width:1.5px;height:1.5px;background:#a8a8a8"></div><div class="abs" style="left:643.5px;top:553.5px;width:1.5px;height:1.5px;background:#fafafa"></div><div class="abs" style="left:642.5px;top:556px;width:1.5px;height:1.5px;background:#a8a8a8"></div><div class="abs" style="left:643.5px;top:557.5px;width:1.5px;height:1.5px;background:#fafafa"></div><div class="abs" style="left:642.5px;top:560px;width:1.5px;height:1.5px;background:#a8a8a8"></div><div class="abs" style="left:643.5px;top:561.5px;width:1.5px;height:1.5px;background:#fafafa"></div><div class="abs" style="left:642.5px;top:564px;width:1.5px;height:1.5px;background:#a8a8a8"></div><div class="abs" style="left:643.5px;top:565.5px;width:1.5px;height:1.5px;background:#fafafa"></div><div class="abs" style="left:642.5px;top:568px;width:1.5px;height:1.5px;background:#a8a8a8"></div><div class="abs" style="left:643.5px;top:569.5px;width:1.5px;height:1.5px;background:#fafafa"></div>
<svg style="left:0;top:0" width="1920" height="1044" viewBox="0 0 1920 1044"><path d="M1023,355 L1027,344 L1033,333 L1041,322 L1050,313 L1062,304 L1077,297 L1093,291 L1110,287 L1127,285.5 L1143,285 L1160,285.5 L1173,286 L1183,286 L1190,285 L1196,282 L1200,278 L1203,272 L1205,267 L1208,260 L1205,254 L1203,248 L1202,237 L1203,228 L1204,225 L1207,220 L1209,219 L1213,221 L1217,224 L1224,229 L1230,232 L1238,236 L1244,232.5 L1250,230 L1258,227 L1267,225 L1274,224.5 L1280,225 L1290,228.5 L1300,233 L1310,238 L1320,243 L1329,247.5 L1337,252 L1343,256 L1348,260 L1352,266 L1355,272 L1356,280 L1356,287 L1355,294 L1353,300 L1353,307 L1353,313 L1354.5,316 L1358,317.5 L1363.3,319.5 L1371.7,322 L1382.5,323.2 L1386.7,326.7 L1390,330 L1398.3,331.3 L1402.5,335 L1402,339 L1400.5,341 L1410,341.5 L1418.3,341.7 L1426.7,338.5 L1436.7,331.7 L1445,323.3 L1448,319 L1456,311.5 L1464,304 L1472,299 L1480,297 L1487,297.5 L1493,300 L1498,304 L1500,308 L1500,316 L1498,323 L1494,333 L1490,343 L1484,356 L1477,370 L1468,382 L1460,393 L1455,403 L1450,413 L1445,422 L1440,430 L1432,439 L1423,447 L1418,454 L1415,460 L1415,487 L1417,513 L1415,533 L1413,548 L1412,568 L1410,580 L1416,589 L1423,598 L1428,611 L1433,625 L1438,640 L1442,655 L1445,671 L1448,688 L1451,705 L1452,721 L1452,738 L1450,755 L1447,769 L1445,781 L1449,793 L1453,803 L1458,811 L1463,818 L1472,828 L1480,837 L1488,845 L1497,853 L1505,862 L1513,870 L1518,875 L1522,880 L1521,887 L1513,895 L1508,898 L1502,901 L1493,902.5 L1485,904 L1479,907 L1473,909 L1468,910 L1463,909 L1460,906.5 L1457,903 L1452,897 L1447,892 L1438,884 L1430,877 L1422,869 L1415,862 L1411,855 L1407,848 L1400,855 L1395,860 L1390,865 L1384,870.5 L1378,875 L1371,878 L1363,880 L1353,881 L1343,881 L1333,879 L1323,876 L1315,871 L1307,865 L1300,857 L1295,850 L1292,844 L1291,838 L1291,829 L1290,820 L1288,812 L1285,805 L1280,797 L1273,791 L1263,781 L1253,771 L1246,761 L1240,751 L1231,739 L1223,728 L1216,718 L1210,708 L1203,698 L1197,688 L1192,676 L1188,665 L1188,653 L1187,641 L1184,628 L1182,615 L1181,598 L1180,581 L1179,565 L1179,548 L1180,533 L1183,513 L1185,501 L1188,490 L1192,480 L1195,470 L1196,460 L1197,450 L1200,441 L1202,433 L1204,423 L1206,413 L1206,403 L1207,393 L1210,385 L1213,377 L1217,371 L1220,365 L1216,357 L1212,350 L1208,344 L1203,338 L1198,336.5 L1193,337 L1183,339 L1173,342 L1158,347 L1143,352 L1128,357.5 L1113,363 L1100,368 L1087,373 L1075,375.5 L1063,376 L1053,375 L1043,372 L1036,368 L1030,363 L1026,359 Z M1352,760 L1354,752 L1358,749 L1366,749 L1373,751 L1376,757 L1378,765 L1379,775 L1379,785 L1381,793 L1383.3,796.7 L1385,805 L1388,813 L1391,823 L1387,821.5 L1380,821 L1370,822 L1365,825 L1362,827.5 L1357,828 L1355,820 L1353,811 L1352,796 L1351,781 Z" fill="#222222" fill-rule="evenodd" stroke="#222" stroke-width="0.6" stroke-linejoin="round" shape-rendering="crispEdges"/><path d="M1468.3,340 L1473.3,326.7 L1483.3,313.3 L1496.7,310 L1498.3,316.7 L1490,333.3 L1480,343.3 L1470,343.3 Z" fill="#4d86c6" fill-opacity="0.3"/><path d="M1397,372 L1403,361 L1416.5,352 L1424.5,357.5 L1423,371 L1414,380 L1402,379 Z" fill="#4d86c6" fill-opacity="0.3"/><path d="M1365,870 L1366.7,861.7 L1375,836.7 L1386.7,827.5 L1396.7,835 L1403.3,830.8 L1407.5,836.7 L1403.3,846.7 L1390,863.3 L1378.3,871.7 Z" fill="#4d86c6" fill-opacity="0.3"/><path d="M1468,337 L1474,327 L1479.6,317.8 L1488.2,310.6 L1486.3,318.7 L1481,330 L1475.8,341.7 L1472,342.7 Z" fill="#4d86c6"/><path d="M1408.7,362.8 L1415.4,352.3 L1418.3,354.2 L1411.6,368.5 L1404,378 L1401,376.2 Z" fill="#4d86c6"/><path d="M1370.7,869.8 L1380.6,869.8 L1382.9,852.9 L1386,835.3 L1388.3,827.6 L1385.2,829.2 L1379.8,846.8 L1373,862.1 Z" fill="#4d86c6"/><path d="M1388.3,828 L1396.7,835.3 L1386,857.5 L1385.2,844.5 Z" fill="#4d86c6"/><path d="M1402.8,831.8 L1406.3,835.3 L1400.5,843.7 Z" fill="#4d86c6"/><path d="M1505,895.8 L1517.5,888.3 L1518.3,890.8 L1510,896.7 Z" fill="#4d86c6"/><path d="M1493,311.5 L1480.6,336" stroke="#4d86c6" stroke-width="1.6" stroke-opacity="0.9"/><path d="M1497.3,312.5 L1485.4,336" stroke="#4d86c6" stroke-width="1.3" stroke-opacity="0.8"/><path d="M1490.4,311 L1478.4,338" stroke="#4d86c6" stroke-width="0.8" stroke-opacity="0.7"/><path d="M1422,357 L1411.6,377" stroke="#4d86c6" stroke-width="1.6" stroke-opacity="0.9"/><path d="M1419.8,355.5 L1408,377.5" stroke="#4d86c6" stroke-width="0.9" stroke-opacity="0.7"/><path d="M1400.5,365 L1397,373" stroke="#4d86c6" stroke-width="1" stroke-opacity="0.5"/><path d="M1424,360 L1416,375" stroke="#4d86c6" stroke-width="0.8" stroke-opacity="0.5"/><path d="M1376,835.3 L1366.8,868.2" stroke="#4d86c6" stroke-width="1.5" stroke-opacity="0.9"/><path d="M1381.4,835.3 L1373.7,856" stroke="#4d86c6" stroke-width="1.2" stroke-opacity="0.8"/><path d="M1395.2,848.3 L1387.5,863.6" stroke="#4d86c6" stroke-width="1" stroke-opacity="0.6"/><path d="M1398,846 L1391,860" stroke="#4d86c6" stroke-width="0.8" stroke-opacity="0.5"/><g fill="#b4d0f0" fill-opacity="0.8"><rect x="1101" y="326" width="1" height="1"/><rect x="1110" y="342" width="1" height="1"/><rect x="1066" y="324" width="1" height="1"/><rect x="1128" y="325" width="1" height="1"/><rect x="1106" y="340" width="1" height="1"/><rect x="1067" y="338" width="1" height="1"/><rect x="1087" y="323" width="1" height="1"/><rect x="1071" y="335" width="1" height="1"/><rect x="1113" y="324" width="1" height="1"/><rect x="1090" y="324" width="1" height="1"/><rect x="1130" y="335" width="1" height="1"/><rect x="1067" y="340" width="1" height="1"/><rect x="1075" y="329" width="1" height="1"/><rect x="1140" y="342" width="1" height="1"/><rect x="1242" y="703" width="1" height="1"/><rect x="1285" y="636" width="1" height="1"/><rect x="1263" y="635" width="1" height="1"/><rect x="1252" y="667" width="1" height="1"/><rect x="1288" y="648" width="1" height="1"/><rect x="1250" y="703" width="1" height="1"/><rect x="1274" y="701" width="1" height="1"/><rect x="1258" y="643" width="1" height="1"/><rect x="1259" y="677" width="1" height="1"/><rect x="1247" y="700" width="1" height="1"/><rect x="1243" y="702" width="1" height="1"/><rect x="1242" y="709" width="1" height="1"/><rect x="1261" y="693" width="1" height="1"/><rect x="1289" y="729" width="1" height="1"/><rect x="1275" y="689" width="1" height="1"/><rect x="1293" y="676" width="1" height="1"/><rect x="1273" y="661" width="1" height="1"/><rect x="1258" y="719" width="1" height="1"/><rect x="1266" y="640" width="1" height="1"/><rect x="1273" y="697" width="1" height="1"/><rect x="1298" y="673" width="1" height="1"/><rect x="1292" y="666" width="1" height="1"/><rect x="1244" y="645" width="1" height="1"/><rect x="1300" y="683" width="1" height="1"/><rect x="1256" y="726" width="1" height="1"/><rect x="1278" y="649" width="1" height="1"/><rect x="1246" y="316" width="1" height="1"/><rect x="1217" y="294" width="1" height="1"/><rect x="1263" y="325" width="1" height="1"/><rect x="1251" y="310" width="1" height="1"/><rect x="1236" y="312" width="1" height="1"/><rect x="1253" y="321" width="1" height="1"/><rect x="1314" y="374" width="1" height="1"/><rect x="1248" y="350" width="1" height="1"/><rect x="1274" y="375" width="1" height="1"/><rect x="1248" y="348" width="1" height="1"/><rect x="1279" y="373" width="1" height="1"/><rect x="1276" y="369" width="1" height="1"/><rect x="1284" y="346" width="1" height="1"/><rect x="1299" y="367" width="1" height="1"/><rect x="1305" y="599" width="1" height="1"/><rect x="1303" y="591" width="1" height="1"/><rect x="1301" y="573" width="1" height="1"/><rect x="1324" y="578" width="1" height="1"/><rect x="1304" y="607" width="1" height="1"/><rect x="1327" y="765" width="1" height="1"/><rect x="1332" y="771" width="1" height="1"/><rect x="1322" y="750" width="1" height="1"/><rect x="1334" y="765" width="1" height="1"/><rect x="1337" y="757" width="1" height="1"/><rect x="1463" y="881" width="1" height="1"/><rect x="1490" y="876" width="1" height="1"/><rect x="1481" y="879" width="1" height="1"/><rect x="1479" y="875" width="1" height="1"/><rect x="1464" y="870" width="1" height="1"/><rect x="1466" y="872" width="1" height="1"/><rect x="1239" y="534" width="1" height="1"/><rect x="1225" y="551" width="1" height="1"/><rect x="1236" y="536" width="1" height="1"/><rect x="1243" y="520" width="1" height="1"/></g>
<g>
<path d="M680.4,899.6 L694,907.8" stroke="#e87a10" stroke-width="1.400"/>
<path d="M744.800,899.400 L731.500,907.800" stroke="#1464d2" stroke-width="1.400"/>
<path d="M690.800,908.300 C694,904 704,902 712.500,902 C722,902 731,904 734.200,908.300 L712.900,921.800 Z" fill="#14a83c"/>
<polygon points="699.600,905.400 712.600,904.400 712.200,920 697.600,912.400" fill="#1e8ce6"/>
<polygon points="709.400,904.600 712.600,904.400 712.200,920 710.400,919" fill="#1464c8"/>
<polygon points="713.200,904.200 725,905.800 728,911.800 713.400,920.200" fill="#b45a14"/>
<polygon points="713.200,904.200 715.800,904.400 715.600,919 713.400,920.200" fill="#f07814"/>
<polygon points="727.600,908 732.600,907.200 731,910 728.400,911" fill="#1464d2"/>
<polygon points="693.400,907 696,909.800 694,909" fill="#f05a14"/>
<polygon points="694.800,908.800 697.800,908.400 697.600,911.800" fill="#b4781e"/>
<path d="M713.100,880 V904" stroke="#14a046" stroke-width="1.900"/>
</g>
<g font-family="Liberation Sans, sans-serif" font-size="12.500" fill="#333">
<text x="708.600" y="878">z</text><text x="669.600" y="901" fill="#555">y</text><text x="748.400" y="900.600" fill="#555">x</text>
</g></svg>
<div class="abs" style="left:640px;top:1013px;width:1280px;height:1px;background:#dcdcdc"></div>
<div class="abs" style="left:744px;top:1015px;width:1px;height:22px;background:#dcdcdc"></div>
<div class="abs" style="left:944px;top:1015px;width:1px;height:22px;background:#dcdcdc"></div>
<div class="t " style="left:646.80px;top:1020.00px;font-size:12px;letter-spacing:-0.558px;">450x420x400</div>
<div class="t " style="left:749.00px;top:1020.00px;font-size:12px;letter-spacing:-0.347px;">Select Triangles</div>
<div class="abs" style="left:1437px;top:1016px;width:474px;height:16px;background:#e6e6e6;border:1px solid #bcbcbc;box-sizing:border-box"></div>
<div class="abs" style="left:0px;top:1040px;width:1920px;height:4px;background:#cfe3ec"></div>
<div class="abs" style="left:48px;top:1040px;width:343px;height:4px;background:#fdfdfd;border-top:1px solid #b0b0b0;box-sizing:border-box"></div>
<div class="abs" style="left:1235px;top:1040px;width:160px;height:4px;background:#e8f1f5"></div>
<div class="abs" style="left:1395px;top:1040px;width:525px;height:4px;background:#ccdce5"></div>
</div>
</body></html>
